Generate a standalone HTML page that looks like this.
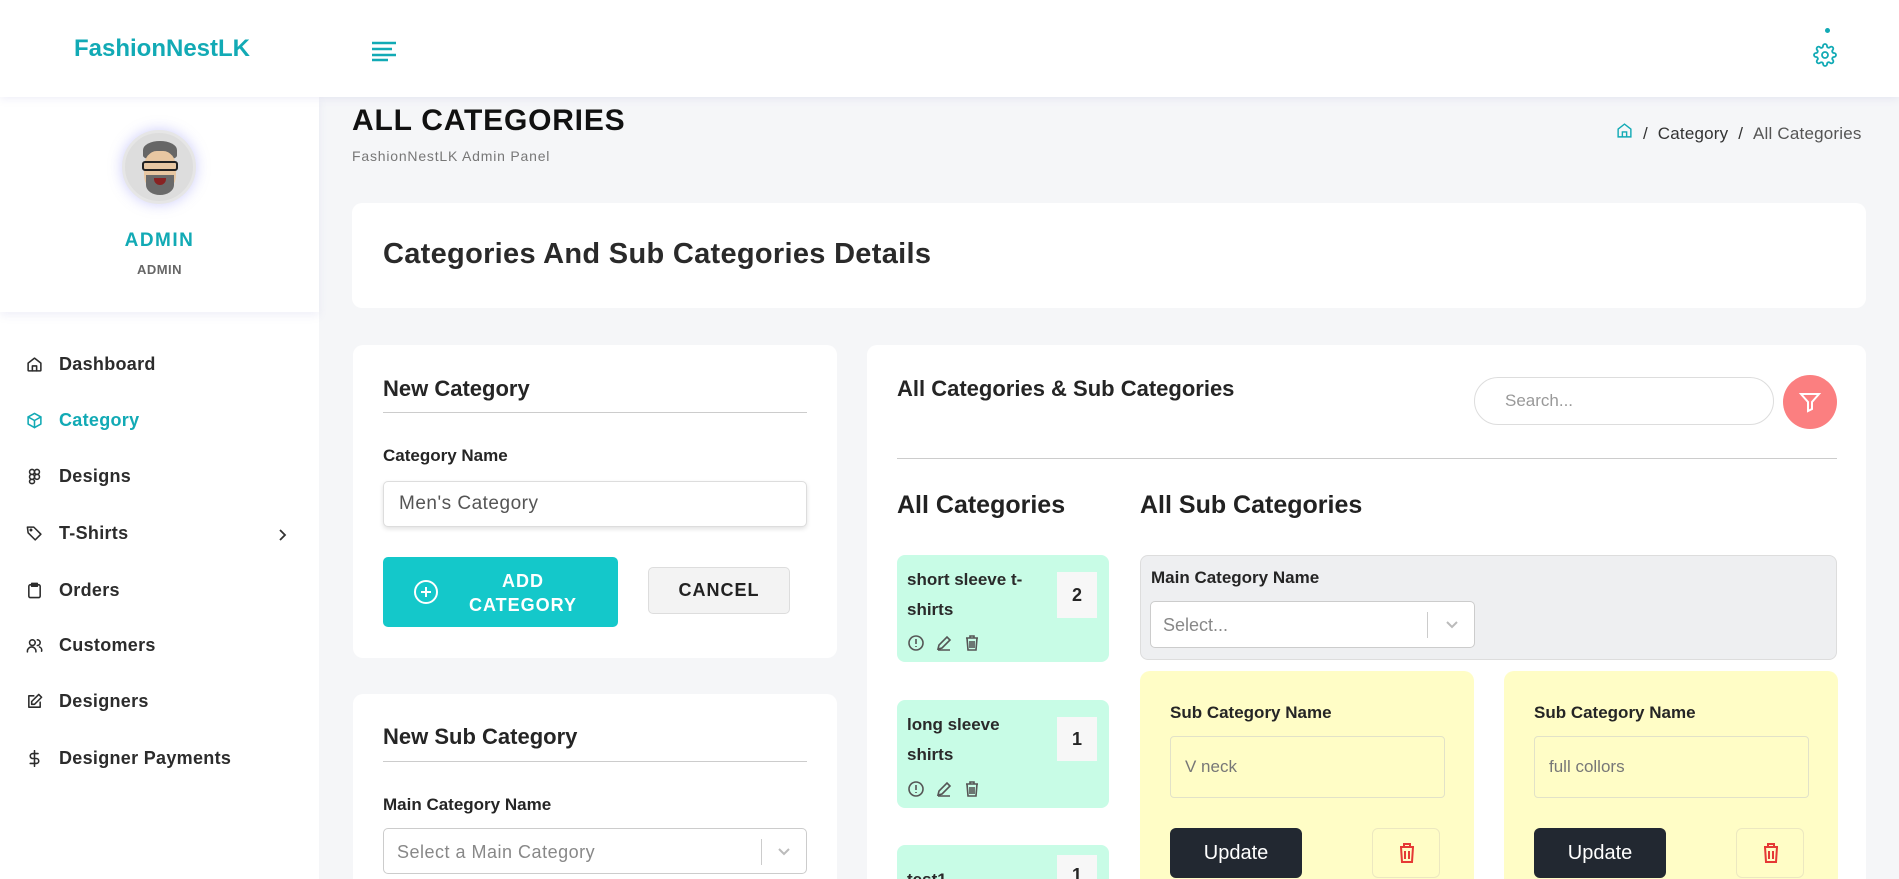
<!DOCTYPE html>
<html><head><meta charset="utf-8"><style>
*{box-sizing:border-box;margin:0;padding:0}
html{width:1899px;height:879px;overflow:hidden}
body{width:1899px;height:879px;overflow:hidden;background:#f5f6f8;font-family:"Liberation Sans",sans-serif;color:#252525;position:relative}
.abs{position:absolute}
.header{left:0;top:0;width:1899px;height:97px;background:#fff;box-shadow:0 2px 8px rgba(120,120,200,.12);z-index:2}
.side{left:0;top:97px;width:319px;height:782px;background:#fff}
.prof{left:0;top:97px;width:319px;height:215px;background:#fff;box-shadow:0 4px 8px rgba(120,120,200,.1);z-index:1}
.menu{left:26px;font-weight:bold;font-size:18px;color:#2c2c2c;display:flex;align-items:center;letter-spacing:.3px}
.menu svg{width:17px;height:17px;margin-right:16px;fill:none;stroke:#2c2c2c;stroke-width:2.2;stroke-linecap:round;stroke-linejoin:round}
.card{background:#fff;border-radius:10px}
.h{font-weight:bold}
.input{background:#fff;border:1px solid #ddd;border-radius:5px}
.cat{background:#c8fce6;border-radius:8px;left:897px;width:212px}
.cat .t{position:absolute;left:10px;top:10px;font-size:17px;font-weight:bold;line-height:30px;color:#2a2a2a}
.cat .n{position:absolute;right:12px;width:40px;background:#f7f7f7;font-weight:bold;font-size:18px;text-align:center}
.cat .ic{position:absolute;left:10px;bottom:10px;display:flex;gap:10px}
.cat .ic svg{width:18px;height:18px;fill:none;stroke:#555;stroke-width:1.6}
.sub{background:#fffdc6;border-radius:10px 10px 0 0;top:671px;height:208px;width:334px;overflow:hidden}
.sub .l{position:absolute;left:30px;top:32px;font-weight:bold;font-size:17px}
.sub .i{position:absolute;left:30px;top:65px;width:275px;height:62px;border:1px solid #e2e2c8;border-radius:4px;font-size:17px;color:#777;padding:20px 14px}
.sub .u{position:absolute;left:30px;top:157px;width:132px;height:50px;background:#222831;border-radius:6px;color:#fff;font-size:20px;text-align:center;line-height:50px}
.sub .d{position:absolute;left:232px;top:157px;width:68px;height:50px;border:1px solid #ece8c0;border-radius:6px}
.chev{position:absolute;right:14px;top:14px}
</style></head><body>
<div class="abs header">
 <div class="abs" style="left:74px;top:35px;font-size:24px;font-weight:bold;color:#12aab5">FashionNestLK</div>
 <svg class="abs" style="left:371px;top:40px" width="26" height="22" viewBox="0 0 26 22"><g stroke="#12aab5" stroke-width="2.6"><path d="M1 3h24M1 9h20M1 15h24M1 20h16"/></g></svg>
 <div class="abs" style="left:1825px;top:28px;width:5px;height:5px;border-radius:50%;background:#12aab5"></div>
 <svg class="abs" style="left:1813px;top:43px" width="24" height="24" viewBox="0 0 24 24" fill="none" stroke="#12aab5" stroke-width="1.8"><circle cx="12" cy="12" r="3"/><path d="M19.4 15a1.65 1.65 0 0 0 .33 1.82l.06.06a2 2 0 1 1-2.830 2.83l-.06-.06a1.650 1.65 0 0 0-1.82-.33 1.65 1.65 0 0 0-1 1.51V21a2 2 0 0 1-4 0v-.09A1.65 1.65 0 0 0 9 19.4a1.65 1.65 0 0 0-1.82.33l-.06.06a2 2 0 1 1-2.83-2.83l.06-.06A1.65 1.65 0 0 0 4.68 15a1.65 1.65 0 0 0-1.51-1H3a2 2 0 0 1 0-4h.09A1.65 1.65 0 0 0 4.6 9a1.65 1.65 0 0 0-.33-1.82l-.06-.06a2 2 0 1 1 2.83-2.83l.06.06A1.65 1.65 0 0 0 9 4.68a1.65 1.65 0 0 0 1-1.51V3a2 2 0 0 1 4 0v.09a1.65 1.65 0 0 0 1 1.51 1.65 1.65 0 0 0 1.82-.33l.06-.06a2 2 0 1 1 2.83 2.83l-.06.06A1.65 1.65 0 0 0 19.4 9a1.65 1.65 0 0 0 1.51 1H21a2 2 0 0 1 0 4h-.09a1.65 1.65 0 0 0-1.510 1z"/></svg>
</div>
<div class="abs side"></div>
<div class="abs prof">
 <div class="abs" style="left:122px;top:33px;width:74px;height:74px;border-radius:50%;background:#ddd;border:3px solid #e6e6e6;box-shadow:0 0 14px rgba(110,110,240,.35);overflow:hidden">
  <div class="abs" style="left:18px;top:8px;width:34px;height:18px;background:#666;border-radius:50% 50% 20% 20%"></div>
  <div class="abs" style="left:19px;top:18px;width:32px;height:40px;background:#e8c7a2;border-radius:40%"></div>
  <div class="abs" style="left:21px;top:42px;width:28px;height:20px;background:#6a6a6a;border-radius:0 0 50% 50%"></div>
  <div class="abs" style="left:17px;top:28px;width:36px;height:10px;border:2px solid #222;border-radius:3px"></div>
  <div class="abs" style="left:29px;top:45px;width:12px;height:7px;background:#822;border-radius:0 0 6px 6px"></div>
 </div>
 <div class="abs" style="left:0;width:319px;top:133px;text-align:center;font-size:19px;font-weight:bold;color:#12aab5;letter-spacing:1.5px">ADMIN</div>
 <div class="abs" style="left:0;width:319px;top:165px;text-align:center;font-size:13px;font-weight:bold;color:#666;letter-spacing:.5px">ADMIN</div>
</div>
<div class="abs menu" style="top:354px"><svg viewBox="0 0 24 24"><path d="M3 10l9-7 9 7v10a1 1 0 0 1-1 1H4a1 1 0 0 1-1-1z"/><path d="M9 21v-7h6v7"/></svg>Dashboard</div>
<div class="abs menu" style="top:410px;color:#12aab5"><svg viewBox="0 0 24 24" style="stroke:#12aab5"><path d="M12 2l9 5v10l-9 5-9-5V7z"/><path d="M3 7l9 5 9-5M12 12v10"/></svg>Category</div>
<div class="abs menu" style="top:466px"><svg viewBox="0 0 24 24"><rect x="5" y="2" width="7" height="7" rx="3.5"/><rect x="12" y="2" width="7" height="7" rx="3.5"/><rect x="5" y="9" width="7" height="7" rx="3.5"/><circle cx="15.5" cy="12.5" r="3.5"/><rect x="5" y="16" width="7" height="6" rx="3"/></svg>Designs</div>
<div class="abs menu" style="top:523px"><svg viewBox="0 0 24 24"><path d="M2 3h9l10 10-8 8L3 11z"/><circle cx="7" cy="7" r="1"/></svg>T-Shirts</div>
<svg class="abs" style="left:277px;top:528px" width="10" height="14" viewBox="0 0 10 14" fill="none" stroke="#333" stroke-width="1.8"><path d="M3 2l5 5-5 5"/></svg>
<div class="abs menu" style="top:580px"><svg viewBox="0 0 24 24"><rect x="4" y="4" width="16" height="18" rx="2"/><path d="M8 2h8v4H8z"/></svg>Orders</div>
<div class="abs menu" style="top:635px"><svg viewBox="0 0 24 24"><circle cx="9" cy="8" r="4"/><path d="M2 21v-1a6 6 0 0 1 12 0v1M16 4a4 4 0 0 1 0 8M19 14a5 5 0 0 1 3 6"/></svg>Customers</div>
<div class="abs menu" style="top:691px"><svg viewBox="0 0 24 24"><path d="M11 4H4v16h16v-7"/><path d="M18 2l4 4-10 10H8v-4z"/></svg>Designers</div>
<div class="abs menu" style="top:748px"><svg viewBox="0 0 24 24"><path d="M12 1v22M17 5H9.5a3.5 3.5 0 0 0 0 7h5a3.5 3.5 0 0 1 0 7H6"/></svg>Designer Payments</div>

<div class="abs h" style="left:352px;top:104px;font-size:30px;color:#111;letter-spacing:.8px">ALL CATEGORIES</div>
<div class="abs" style="left:352px;top:148px;font-size:14px;color:#777;letter-spacing:.8px">FashionNestLK Admin Panel</div>
<svg class="abs" style="left:1616px;top:122px" width="17" height="17" viewBox="0 0 24 24" fill="none" stroke="#12aab5" stroke-width="2"><path d="M3 10l9-7 9 7v11H3z"/><path d="M9 21v-7h6v7"/></svg>
<div class="abs" style="left:1643px;top:124px;font-size:17px;color:#333;letter-spacing:.2px">/&nbsp;&nbsp;Category&nbsp;&nbsp;/&nbsp;&nbsp;<span style="color:#555">All Categories</span></div>

<div class="abs card" style="left:352px;top:203px;width:1514px;height:105px"></div>
<div class="abs h" style="left:383px;top:238px;font-size:29px;color:#2a2a2a;letter-spacing:.3px">Categories And Sub Categories Details</div>

<div class="abs card" style="left:353px;top:345px;width:484px;height:313px"></div>
<div class="abs h" style="left:383px;top:376px;font-size:22px">New Category</div>
<div class="abs" style="left:383px;top:412px;width:424px;height:1px;background:#ccc"></div>
<div class="abs h" style="left:383px;top:446px;font-size:17px">Category Name</div>
<div class="abs input" style="left:383px;top:481px;width:424px;height:46px;box-shadow:0 2px 5px rgba(0,0,0,.12);font-size:19px;color:#555;padding:11px 15px;letter-spacing:.5px">Men's Category</div>
<div class="abs" style="left:383px;top:557px;width:235px;height:70px;background:#14c8ca;border-radius:5px;color:#fff"><svg class="abs" style="left:30px;top:22px" width="26" height="26" viewBox="0 0 26 26" fill="none" stroke="#fff" stroke-width="2"><circle cx="13" cy="13" r="11"/><path d="M13 8v10M8 13h10"/></svg><div class="abs h" style="left:75px;width:130px;top:12px;text-align:center;font-size:18px;line-height:24px;letter-spacing:1px">ADD<br>CATEGORY</div></div>
<div class="abs h" style="left:648px;top:567px;width:142px;height:47px;background:#f3f3f3;border:1px solid #ddd;border-radius:5px;text-align:center;line-height:45px;font-size:18px;letter-spacing:1px;color:#222">CANCEL</div>

<div class="abs card" style="left:353px;top:694px;width:484px;height:200px"></div>
<div class="abs h" style="left:383px;top:724px;font-size:22px">New Sub Category</div>
<div class="abs" style="left:383px;top:761px;width:424px;height:1px;background:#ccc"></div>
<div class="abs h" style="left:383px;top:795px;font-size:17px">Main Category Name</div>
<div class="abs input" style="left:383px;top:828px;width:424px;height:46px;border-color:#ccc;font-size:18px;color:#888;padding:13px 13px;letter-spacing:.5px">Select a Main Category<div class="abs" style="right:44px;top:10px;width:1px;height:26px;background:#ccc"></div><svg class="chev" width="16" height="16" viewBox="0 0 16 16" fill="none" stroke="#bbb" stroke-width="2"><path d="M3 6l5 5 5-5"/></svg></div>

<div class="abs card" style="left:867px;top:345px;width:999px;height:560px"></div>
<div class="abs h" style="left:897px;top:376px;font-size:22px">All Categories &amp; Sub Categories</div>
<div class="abs" style="left:1474px;top:377px;width:300px;height:48px;border:1px solid #ddd;border-radius:24px;font-size:17px;color:#999;padding:13px 30px">Search...</div>
<div class="abs" style="left:1783px;top:375px;width:54px;height:54px;border-radius:50%;background:#fb7f80"><svg class="abs" style="left:15px;top:15px" width="24" height="24" viewBox="0 0 24 24" fill="none" stroke="#fff" stroke-width="2"><path d="M3 4h18l-7 8v7l-4 2v-9z"/></svg></div>
<div class="abs" style="left:897px;top:458px;width:940px;height:1px;background:#ccc"></div>
<div class="abs" style="left:897px;top:491px;font-size:25px;font-weight:bold;color:#222">All Categories</div>
<div class="abs" style="left:1140px;top:491px;font-size:25px;font-weight:bold;color:#222">All Sub Categories</div>

<div class="abs cat" style="top:555px;height:107px"><div class="t">short sleeve t-<br>shirts</div><div class="n" style="top:17px;height:46px;line-height:46px">2</div><div class="ic"><svg viewBox="0 0 18 18"><circle cx="9" cy="9" r="7"/><path d="M9 5v5M9 12v1"/></svg><svg viewBox="0 0 18 18"><path d="M3 15l1-4 8-8 3 3-8 8zM3 16h12"/></svg><svg viewBox="0 0 18 18"><path d="M3 4h12M7 4V2h4v2M4 4l1 12h8l1-12M7 7v7M9 7v7M11 7v7"/></svg></div></div>
<div class="abs cat" style="top:700px;height:108px"><div class="t">long sleeve<br>shirts</div><div class="n" style="top:17px;height:44px;line-height:44px">1</div><div class="ic"><svg viewBox="0 0 18 18"><circle cx="9" cy="9" r="7"/><path d="M9 5v5M9 12v1"/></svg><svg viewBox="0 0 18 18"><path d="M3 15l1-4 8-8 3 3-8 8zM3 16h12"/></svg><svg viewBox="0 0 18 18"><path d="M3 4h12M7 4V2h4v2M4 4l1 12h8l1-12M7 7v7M9 7v7M11 7v7"/></svg></div></div>
<div class="abs cat" style="top:845px;height:34px;border-radius:8px 8px 0 0;overflow:hidden"><div class="t" style="top:20px">test1</div><div class="n" style="top:10px;height:40px;line-height:40px">1</div></div>

<div class="abs" style="left:1140px;top:555px;width:697px;height:105px;background:#eeeff1;border:1px solid #ddd;border-radius:8px">
 <div class="abs h" style="left:10px;top:12px;font-size:17px">Main Category Name</div>
 <div class="abs input" style="left:9px;top:45px;width:325px;height:47px;border-color:#ccc;font-size:18px;color:#888;padding:13px 12px">Select...<div class="abs" style="right:46px;top:10px;width:1px;height:26px;background:#ccc"></div><svg class="chev" width="16" height="16" viewBox="0 0 16 16" fill="none" stroke="#bbb" stroke-width="2"><path d="M3 6l5 5 5-5"/></svg></div>
</div>
<div class="abs sub" style="left:1140px"><div class="l">Sub Category Name</div><div class="i">V neck</div><div class="u">Update</div><div class="d"><svg class="abs" style="left:25px;top:14px" width="18" height="20" viewBox="0 0 18 20" fill="none" stroke="#e53935" stroke-width="2"><path d="M2 4h14M6 4V1h6v3M3 4l1 15h10l1-15M7 8v8M11 8v8"/></svg></div></div>
<div class="abs sub" style="left:1504px"><div class="l">Sub Category Name</div><div class="i">full collors</div><div class="u">Update</div><div class="d"><svg class="abs" style="left:25px;top:14px" width="18" height="20" viewBox="0 0 18 20" fill="none" stroke="#e53935" stroke-width="2"><path d="M2 4h14M6 4V1h6v3M3 4l1 15h10l1-15M7 8v8M11 8v8"/></svg></div></div>
</body></html>
